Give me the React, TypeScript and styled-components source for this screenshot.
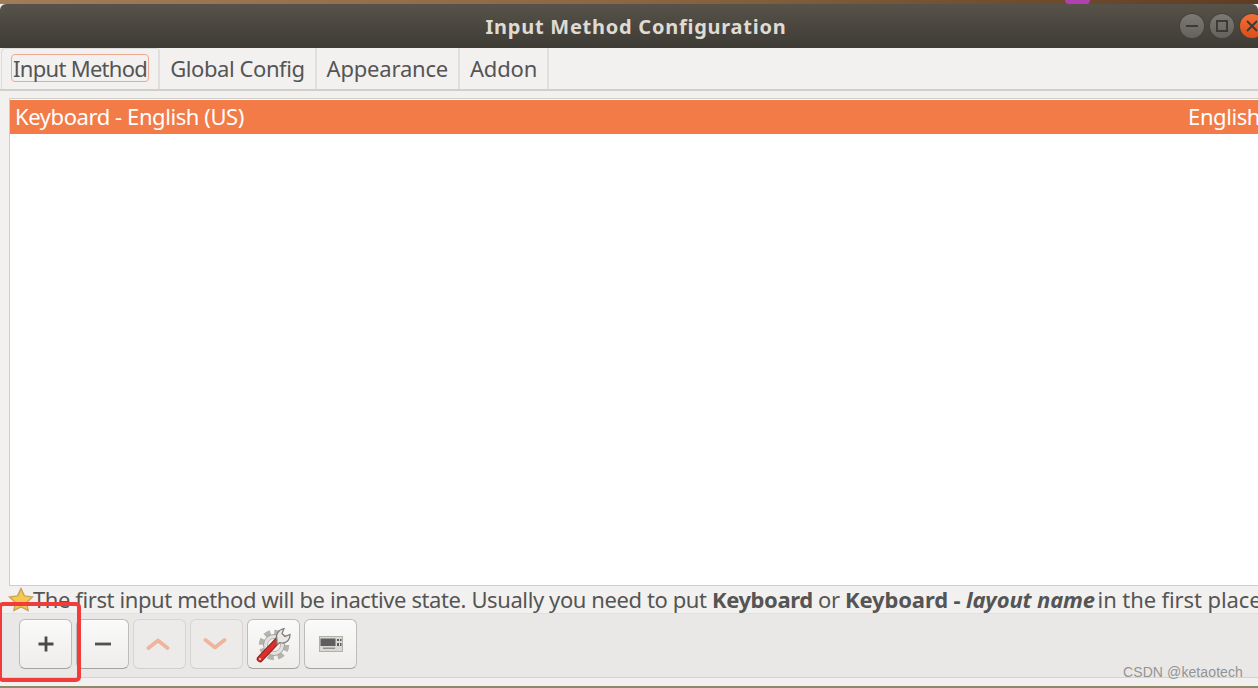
import { ReactNode } from "react";
import styled, { createGlobalStyle } from "styled-components";

const GlobalStyle = createGlobalStyle`
    html, body {
        margin: 0;
        padding: 0;
        background: #f2f1f0;
    }
    body {
        font-family: "Noto Sans", "Open Sans", "DejaVu Sans", sans-serif;
    }
`;

const Screen = styled.div`
    position: relative;
    width: 1258px;
    height: 688px;
    overflow: hidden;
    display: flex;
    flex-direction: column;
    background: #f2f1f0;
    color: #4c4c4c;
`;

const Desktop = styled.div`
    position: relative;
    height: 4px;
    flex: none;
    background: linear-gradient(90deg, #a07c58 0%, #8a6642 50%, #5f3d24 100%);
`;

const DesktopBlob = styled.div`
    position: absolute;
    left: 1065px;
    top: 0;
    width: 25px;
    height: 4px;
    background: #b23fb0;
    border-radius: 0 0 12px 12px;
`;

const TitleBar = styled.div`
    position: relative;
    height: 44px;
    flex: none;
    display: flex;
    align-items: center;
    justify-content: center;
    padding-left: 14px;
    box-sizing: border-box;
    border-radius: 6px 6px 0 0;
    background: linear-gradient(180deg, #57534b 0%, #3e3b35 100%);
    color: #dfdbd2;
    font-size: 20px;
    font-weight: 700;
    letter-spacing: 0.75px;
`;

const WindowButtons = styled.div`
    position: absolute;
    left: 1180px;
    top: 10px;
    display: flex;
    gap: 6px;
`;

const WindowButton = styled.div<{ $close?: boolean }>`
    width: 24px;
    height: 24px;
    border-radius: 50%;
    flex: none;
    display: flex;
    align-items: center;
    justify-content: center;
    background: ${(props) =>
        props.$close
            ? "linear-gradient(180deg, #f0703a, #dd4d17)"
            : "linear-gradient(180deg, #7b7972, #64625c)"};
    box-shadow: 0 0 0 1px #45423c;
`;

const TabBar = styled.div`
    height: 41px;
    flex: none;
    display: flex;
    padding-left: 1px;
    border-bottom: 2px solid #d0cfcc;
    box-sizing: content-box;
`;

const Tab = styled.div<{ $active?: boolean; $spacing?: number }>`
    display: flex;
    align-items: center;
    padding: ${(props) => (props.$active ? "0 9px 2px 10px" : "0 10px 2px")};
    font-size: 22px;
    letter-spacing: ${(props) => props.$spacing ?? -0.2}px;
    color: #555;
    border-right: 2px solid #e0dfdd;
    border-radius: ${(props) => (props.$active ? "4px 4px 0 0" : "0")};
    box-shadow: ${(props) => (props.$active ? "inset 1px 1px 0 #dddcda" : "none")};
`;

const FocusLabel = styled.span`
    border: 1px solid #f0a890;
    border-radius: 4px;
    padding: 0 1px;
    line-height: 26px;
`;

const Content = styled.div`
    flex: 1;
    display: flex;
    flex-direction: column;
    padding: 7px 0 0 9px;
    min-height: 0;
`;

const ListBox = styled.div`
    height: 488px;
    flex: none;
    background: #fff;
    border: 1px solid #cfcecb;
    border-right: none;
    padding-top: 1px;
    box-sizing: border-box;
`;

const SelectedRow = styled.div`
    height: 34px;
    display: flex;
    align-items: center;
    justify-content: space-between;
    padding: 0 0 2px 5px;
    box-sizing: border-box;
    background: #f37b48;
    color: #fff;
    font-size: 22px;
    letter-spacing: -0.42px;
    white-space: nowrap;
`;

const RowLanguage = styled.span`
    margin-right: -2px;
`;

const InfoLine = styled.div`
    height: 27px;
    flex: none;
    margin-left: -1px;
    padding-bottom: 2px;
    box-sizing: border-box;
    display: flex;
    align-items: center;
    font-size: 22px;
    letter-spacing: -0.4px;
    color: #555;
    white-space: pre;
`;

const InfoStrong = styled.b`
    letter-spacing: -0.13px;
`;

const InfoTail = styled.span`
    margin-left: -3px;
    letter-spacing: -0.1px;
`;

const StarIcon = styled.svg`
    width: 26px;
    height: 26px;
    flex: none;
    margin: 2px -1px 0 0;
`;

const Toolbar = styled.div`
    height: 65px;
    flex: none;
    margin-left: -9px;
    padding: 5px 0 0 19px;
    box-sizing: border-box;
    display: flex;
    gap: 4px;
    background: #e9e8e6;
    border-top: 1px solid #e2e1df;
    border-bottom: 1px solid #d4d3d0;
`;

const ToolButton = styled.div<{ $disabled?: boolean }>`
    width: 53px;
    height: 50px;
    box-sizing: border-box;
    flex: none;
    display: flex;
    align-items: center;
    justify-content: center;
    padding-right: ${(props) => (props.$disabled ? "3px" : "0")};
    border-radius: 6px;
    border: 1px solid ${(props) => (props.$disabled ? "#d6d5d2" : "#bdbcb8")};
    border-bottom-color: ${(props) => (props.$disabled ? "#d0cfcc" : "#a3a29e")};
    background: ${(props) =>
        props.$disabled
            ? "#ecebe9"
            : "linear-gradient(180deg, #fafafa 0%, #eeedeb 100%)"};
`;

const BottomStrip = styled.div`
    height: 10px;
    flex: none;
    margin-left: -9px;
    background: #f2f1f0;
    border-bottom: 2px solid #8c8a68;
    box-sizing: border-box;
`;

const Highlight = styled.div`
    position: absolute;
    left: -2px;
    top: 602px;
    width: 83px;
    height: 80px;
    box-sizing: border-box;
    border: 4px solid #f23c3c;
    border-radius: 5px;
    pointer-events: none;
`;

const Watermark = styled.div`
    position: absolute;
    right: 15px;
    bottom: 8px;
    font-family: "Liberation Sans", Arial, sans-serif;
    font-size: 14px;
    letter-spacing: 0.1px;
    color: #949494;
`;

const Glyph = ({ children }: { children: ReactNode }) => (
    <svg width="24" height="24" viewBox="0 0 24 24" fill="none">
        {children}
    </svg>
);

function App() {
    return (
        <Screen>
            <GlobalStyle />
            <Desktop>
                <DesktopBlob />
            </Desktop>
            <TitleBar>
                Input Method Configuration
                <WindowButtons>
                    <WindowButton>
                        <svg width="14" height="14" viewBox="0 0 14 14">
                            <path d="M1 7h12" stroke="#3c3a35" strokeWidth="2" />
                        </svg>
                    </WindowButton>
                    <WindowButton>
                        <svg width="14" height="14" viewBox="0 0 14 14" fill="none">
                            <rect x="2" y="2" width="10" height="10" stroke="#3c3a35" strokeWidth="2" />
                        </svg>
                    </WindowButton>
                    <WindowButton $close>
                        <svg width="14" height="14" viewBox="0 0 14 14">
                            <path d="M2 2l10 10M12 2L2 12" stroke="#3c3a35" strokeWidth="2" />
                        </svg>
                    </WindowButton>
                </WindowButtons>
            </TitleBar>
            <TabBar>
                <Tab $active $spacing={-0.7}>
                    <FocusLabel>Input Method</FocusLabel>
                </Tab>
                <Tab $spacing={-0.42}>Global Config</Tab>
                <Tab>Appearance</Tab>
                <Tab>Addon</Tab>
            </TabBar>
            <Content>
                <ListBox>
                    <SelectedRow>
                        <span>Keyboard - English (US)</span>
                        <RowLanguage>English</RowLanguage>
                    </SelectedRow>
                </ListBox>
                <InfoLine>
                    <StarIcon viewBox="0 0 26 26">
                        <path
                            d="M13 1.5l3.4 7.4 8.1 1-6 5.5 1.6 8L13 19.9l-7.1 3.5 1.6-8-6-5.5 8.1-1z"
                            fill="#f6c84c"
                            stroke="#c9a257"
                            strokeWidth="1.4"
                        />
                    </StarIcon>
                    The first input method will be inactive state. Usually you need to put <b>Keyboard</b> or <InfoStrong>Keyboard - <i>layout name</i></InfoStrong>
                    <InfoTail> in the first place.</InfoTail>
                </InfoLine>
                <Toolbar>
                    <ToolButton>
                        <Glyph>
                            <path d="M12 4.5v15M4.5 12h15" stroke="#4a4a4a" strokeWidth="2.8" />
                        </Glyph>
                    </ToolButton>
                    <ToolButton>
                        <Glyph>
                            <path d="M4 12h16" stroke="#505050" strokeWidth="2.8" />
                        </Glyph>
                    </ToolButton>
                    <ToolButton $disabled>
                        <Glyph>
                            <path d="M2.5 16L12 8.5l9.5 7.5" stroke="#efb59c" strokeWidth="3.8" strokeLinecap="round" strokeLinejoin="round" />
                        </Glyph>
                    </ToolButton>
                    <ToolButton $disabled>
                        <Glyph>
                            <path d="M2.5 8l9.5 7.5L21.5 8" stroke="#efb59c" strokeWidth="3.8" strokeLinecap="round" strokeLinejoin="round" />
                        </Glyph>
                    </ToolButton>
                    <ToolButton>
                        <svg width="38" height="40" viewBox="0 0 38 40" fill="none">
                            <circle cx="19" cy="21" r="12.5" stroke="#b4b3ae" strokeWidth="5.5" strokeDasharray="6 3.8" />
                            <circle cx="19" cy="21" r="10.5" fill="#e2e1de" stroke="#a2a19c" strokeWidth="1" />
                            <circle cx="19" cy="21" r="6.5" fill="#f4f3f1" stroke="#b4b3ae" strokeWidth="1" />
                            <path d="M5 35L25 14" stroke="#8f1f1c" strokeWidth="6.5" strokeLinecap="round" />
                            <path d="M5 35L25 14" stroke="#d9322e" strokeWidth="4.5" strokeLinecap="round" />
                            <circle cx="5" cy="35" r="1" fill="#f4d9d8" />
                            <path d="M22 16c-2-5 1-10 7-11.5l-2 5 3 3 5-2c0 6-5 10-10 8l-3 2z" fill="#e9e8e5" stroke="#7d7c78" strokeWidth="1.2" />
                        </svg>
                    </ToolButton>
                    <ToolButton>
                        <svg width="24" height="16" viewBox="0 0 24 16">
                            <rect x="0.5" y="0.5" width="23" height="15" fill="#d9d8d5" stroke="#b0afab" />
                            <rect x="1.5" y="2.5" width="15" height="7.5" fill="#5e5e5e" />
                            <path d="M18 3h2v2h-2zM21 3h1.5v2H21zM18 7h2v3h-2zM21 7h1.5v3H21z" fill="#5e5e5e" />
                            <rect x="4" y="11.5" width="12" height="1.5" fill="#908f8b" />
                        </svg>
                    </ToolButton>
                </Toolbar>
                <BottomStrip />
            </Content>
            <Highlight />
            <Watermark>CSDN @ketaotech</Watermark>
        </Screen>
    );
}

export default App;
